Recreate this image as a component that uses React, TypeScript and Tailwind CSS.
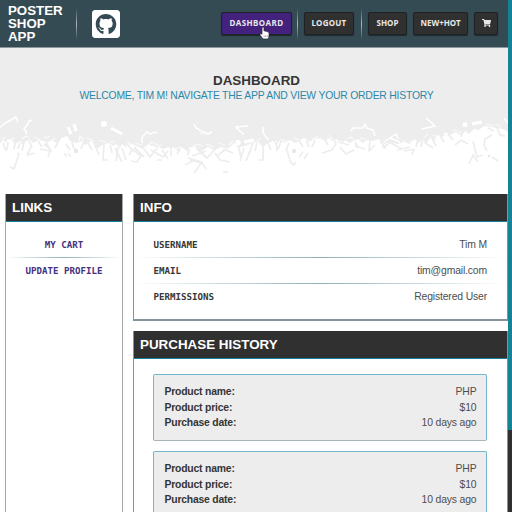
import React from "react";
import { FaGithubSquare, FaShoppingCart } from "react-icons/fa";

const arial = "font-['Liberation_Sans',Arial,sans-serif]";

const whiteMarks =
  "M-1 128 L4 124 L16 117 L18 122 M32 120 L29 121 L27 125 L24 129 L26 131 L26 134 M157 133 L154 132 L151 134 L147 132 L142 137 L142 143 M194 124 L196 128 L200 130 L203 132 L201 134 M203 132 L208 134 L212 132 M248 126 L236 127 L244 135 M263 127 L263 132 L265 136 L269 140 M351 131 L353 128 L363 128 L365 124 L367 128 L373 130 L375 136 M426 118 L435 126 L422 129 M504 118 L509 124 M384 142 L396 134 L398 139 M390 138 L400 142";
const whiteBold = "M68 127 L71 134 M74 124 L76 131 M111 128 L122 134 M244 142 L254 140 M472 124 L482 122";
const whiteSmall =
  "M1 139 L6 138 M11 141 L14 138 M22 139 L26 136 L30 138 M35 137 L40 140 M44 138 L50 136 M52 141 L55 138 M79 141 L80 136 L84 141 M87 138 L94 141 M99 140 L106 142 M110 143 L114 141 M127 142 L132 145 M135 143 L142 145 M144 148 L152 142 L160 146 M162 144 L158 149 M168 147 L171 150 M175 149 L180 147 M190 149 L197 144 L203 146 M206 144 L214 147 M219 143 L225 145 M229 145 L233 141 M257 143 L260 138 M272 143 L277 141 M282 139 L287 142 M293 138 L299 140 M304 138 L309 142 M312 139 L318 136 M320 138 L324 141 M329 135 L333 140 M337 140 L342 142 M347 139 L351 137 L355 141 M360 138 L366 139 M370 142 L377 143 M402 141 L407 143 M409 142 L416 141 M424 138 L428 133 M432 135 L438 137 M443 133 L448 136 M452 130 L459 131 M458 135 L461 131 M486 124 L494 126 M496 124 L501 127";
const grayMarks =
  "M17 153 L19 154 L14 169 L10 167 M31 147 L27 155 L35 153 M40 149 L50 151 L48 157 M52 151 L44 144 M104 144 L103 160 L108 160 M115 148 L122 162 M122 148 L126 160 M132 149 L141 156 L137 162 L131 161 M151 150 L163 157 L168 151 M157 160 L162 160 M190 160 L202 163 L206 169 M185 165 L195 160 M194 173 L202 162 L188 158 M215 153 L220 160 L230 162 M223 149 L233 153 M240 161 L244 148 M246 161 L250 151 M263 146 L263 160 L259 160 M287 151 L291 163 L294 165 L296 162 M299 157 L303 152 M304 159 L308 153 M322 153 L332 150 L336 144 L333 136 M340 147 L346 154 L354 150 M355 146 L365 149 M370 140 L369 151 L375 145 M382 148 L394 140 M397 150 L410 147 M404 151 L414 149 L412 155 M424 142 L433 148 M455 145 L461 140 L468 144 M473 141 L477 157 L483 155 M492 135 L485 139 L484 145 L487 151 M469 164 L473 155 L478 162 M492 157 L498 161 M223 172 L228 172";
const grayTeeth =
  "M3 143 L6 151 M8 142 L7 150 M15 143 L14 149 M20 143 L18 149 M24 142 L22 151 M29 141 L32 147 M38 141 L42 147 M46 143 L50 149 M58 142 L55 148 M66 144 L70 150 M72 142 L74 149 M84 141 L81 149 M88 143 L92 150 M95 145 L99 155 M110 145 L112 153 M118 147 L116 161 M128 145 L132 150 L129 155 M134 147 L144 157 M144 149 L150 157 L157 148 M162 150 L168 159 M171 148 L171 156 M180 149 L177 154 M189 149 L188 155 M196 148 L207 158 L216 148 M206 151 L192 156 M217 156 L226 149 M238 145 L241 157 M253 143 L249 154 M257 143 L255 151 M268 143 L271 150 M276 138 L277 151 M282 139 L278 149 M289 143 L286 151 M299 140 L303 147 M306 140 L309 147 M315 140 L312 147 M325 139 L328 145 M338 142 L349 145 M355 142 L358 148 M380 141 L386 149 M391 143 L402 149 M418 139 L416 147 M423 137 L421 147 M431 136 L436 146 M440 136 L444 142 M448 134 L453 140 M463 130 L461 137 M488 128 L494 131 M497 128 L500 135 L505 136";
const horizon =
  "M0 104 H508 V132 L503 129 L496 128 L491 127 L484 126 L479 130 L474 129 L469 134 L465 131 L461 136 L456 132 L450 135 L446 132 L443 137 L437 135 L434 142 L431 136 L427 143 L422 139 L419 143 L415 139 L409 144 L404 142 L397 144 L390 142 L384 144 L379 139 L373 141 L367 140 L363 143 L358 139 L349 143 L345 140 L342 144 L336 139 L332 141 L329 138 L324 141 L318 138 L312 140 L308 143 L304 138 L299 141 L295 143 L290 140 L284 143 L281 139 L276 145 L273 141 L268 143 L263 147 L258 142 L252 143 L245 146 L239 147 L234 143 L228 149 L222 147 L214 150 L208 147 L200 152 L197 147 L190 147 L187 151 L181 147 L178 151 L173 147 L171 150 L168 147 L164 149 L157 147 L149 145 L143 149 L137 146 L130 143 L126 147 L122 144 L120 148 L116 144 L113 146 L109 143 L104 144 L98 148 L94 145 L92 141 L88 143 L85 145 L82 141 L76 143 L70 141 L67 136 L62 138 L58 143 L51 140 L47 143 L44 141 L38 140 L34 143 L30 140 L26 141 L23 145 L20 141 L15 144 L11 139 L7 140 L6 143 L3 140 L0 144 Z";

function Separator() {
  return <div className="h-8 w-px bg-gradient-to-b from-transparent via-[#aeb9bf] to-transparent" />;
}

function NavButton({ className, children }: { className: string; children: React.ReactNode }) {
  return (
    <div
      className={`flex h-[23px] items-center justify-center rounded-[2px] border border-[#1c2226] pb-px font-['Noto_Sans',sans-serif] text-[8px] font-bold text-[#e8e8e8] shadow-[0_1px_1px_#20282c] ${className}`}
    >
      {children}
    </div>
  );
}

function PanelTitle({ children }: { children: React.ReactNode }) {
  return (
    <h2 className="flex h-7 items-center border-b border-[#16809a] bg-[#303030] px-1.5 pt-px text-[13.4px] font-bold text-white">
      {children}
    </h2>
  );
}

function Rule() {
  return <div className="h-px bg-gradient-to-r from-transparent via-[#8fb0ba] to-transparent" />;
}

function InfoRow({ label, value }: { label: string; value: string }) {
  return (
    <div className="flex h-[25px] items-center justify-between pr-[20px] pl-[19.5px]">
      <span className="pt-[2px] font-['DejaVu_Sans_Mono',monospace] text-[9.15px] font-bold text-[#383838]">
        {label}
      </span>
      <span className="text-[10.4px] tracking-[-0.15px] text-[#4d4d4d]">{value}</span>
    </div>
  );
}

function Purchase() {
  const rows = [
    ["Product name:", "PHP"],
    ["Product price:", "$10"],
    ["Purchase date:", "10 days ago"],
  ];
  return (
    <div className="h-[67px] rounded-[2px] border border-[#73b5c9] border-b-[#a9b5b9] bg-[#ededed] pt-[9px] pr-[9.5px] pl-[10.5px] text-[10.4px] leading-[15.5px]">
      {rows.map(([label, value]) => (
        <div key={label} className="flex justify-between">
          <span className="font-bold tracking-[-0.2px] text-[#353535]">{label}</span>
          <span className="tracking-[-0.15px] text-[#4d4d4d]">{value}</span>
        </div>
      ))}
    </div>
  );
}

function HandCursor() {
  return (
    <svg className="absolute top-[14px] left-[38px] h-[14px] w-[11px]" viewBox="0 0 11 14">
      <path
        d="M3 1.500 Q4 .3 5 1.500 V5 Q6 4.400 6.700 5.300 Q7.700 4.800 8.300 5.900 Q9.800 5.400 10 7 V9.500 Q10 11.500 9 13 H4 Q2.500 10.800 1 9 Q.5 7.600 2 7.500 L3 8.300 Z"
        fill="#fff"
        stroke="#2a2438"
        strokeWidth=".7"
      />
      <path d="M5.200 9.500 V11 M6.800 9.500 V11 M8.300 9.500 V11" stroke="#555" strokeWidth=".5" />
    </svg>
  );
}

export default function App() {
  return (
    <div className={`flex h-[512px] w-[512px] overflow-hidden bg-white ${arial}`}>
      <div className="flex w-[508px] flex-none flex-col">
        <header className="flex h-12 flex-none items-center border-b border-[#8d989c] bg-[#344b54]">
          <div className="ml-2 w-[68px] text-[13.3px] leading-[13px] font-bold text-white">
            <div>POSTER</div>
            <div>SHOP</div>
            <div>APP</div>
          </div>
          <Separator />
          <FaGithubSquare className="ml-[15px] h-8 w-7 flex-none text-white" />
          <div className="ml-auto flex items-center pr-[10px]">
            <div className="relative">
              <NavButton className="w-[71px] bg-[#45217e] tracking-[0.45px]">DASHBOARD</NavButton>
              <HandCursor />
            </div>
            <div className="mr-[6px] ml-[5px]"><Separator /></div>
            <NavButton className="w-[50px] bg-[#303030] tracking-[0.25px]">LOGOUT</NavButton>
            <div className="mr-[6px] ml-[7px]"><Separator /></div>
            <NavButton className="w-[39px] bg-[#303030]">SHOP</NavButton>
            <NavButton className="ml-[6px] w-[55px] bg-[#303030]">NEW+HOT</NavButton>
            <NavButton className="ml-[6px] w-6 bg-[#303030]">
              <FaShoppingCart className="h-2 w-[9px]" />
            </NavButton>
          </div>
        </header>

        <section className="h-[146px] flex-none">
          <div className="h-14 bg-[#ededed] pt-[25px] text-center">
            <h1 className="pl-[5px] text-[13.4px] leading-4 font-bold text-[#353535]">DASHBOARD</h1>
            <p className="pl-[5px] text-[10.4px] leading-[13px] tracking-[-0.22px] whitespace-nowrap text-[#2c88a8]">
              WELCOME, TIM M! NAVIGATE THE APP AND VIEW YOUR ORDER HISTORY
            </p>
          </div>
          <svg className="block h-[90px] w-[508px]" viewBox="0 104 508 90" fill="none">
            <path d={horizon} fill="#ededed" />
            <path d={grayTeeth} stroke="#ededed" strokeWidth="1.8" strokeLinejoin="round" />
            <path d={grayMarks} stroke="#ededed" strokeWidth="1.7" strokeLinejoin="round" />
            <path d="M64 153 L67 157 M68 153 L71 157" stroke="#ededed" strokeWidth="1.5" />
            <path d={whiteSmall} stroke="#fafafa" strokeWidth="1.2" />
            <path d={whiteMarks} stroke="#fff" strokeWidth="1.5" strokeLinejoin="round" />
            <path d={whiteBold} stroke="#fff" strokeWidth="3" />
            <circle cx="104" cy="124" r="3" fill="#fff" />
            <circle cx="64" cy="141" r="3.3" fill="#fff" />
            <circle cx="238" cy="142.500" r="2.700" fill="#fff" />
            <circle cx="465" cy="124.500" r="2.500" fill="#fff" />
            <circle cx="76" cy="151" r="2.200" fill="#e8e8e8" />
            <circle cx="294" cy="151" r="2.200" fill="#e8e8e8" />
            <circle cx="489" cy="156" r="1.300" fill="#e8e8e8" />
          </svg>
        </section>

        <main className="flex min-h-0 flex-1 gap-[10px] pl-[5px]">
          <aside className="w-[118px] flex-none border-x border-[#a3a7a9]">
            <PanelTitle>LINKS</PanelTitle>
            <div className="pt-[10px] text-center font-['DejaVu_Sans_Mono',monospace] text-[9.15px] font-bold text-[#45317e]">
              <div className="h-[25px] leading-[26px]">MY CART</div>
              <Rule />
              <div className="h-[25px] leading-[26px]">UPDATE PROFILE</div>
            </div>
          </aside>
          <div className="flex flex-1 flex-col gap-[10px]">
            <section className="h-[127px] flex-none border-x border-b-2 border-[#84929a]">
              <PanelTitle>INFO</PanelTitle>
              <div className="pt-[10px]">
                <InfoRow label="USERNAME" value="Tim M" />
                <Rule />
                <InfoRow label="EMAIL" value="tim@gmail.com" />
                <Rule />
                <InfoRow label="PERMISSIONS" value="Registered User" />
              </div>
            </section>
            <section className="flex-1 border-x border-[#84929a]">
              <PanelTitle>PURCHASE HISTORY</PanelTitle>
              <div className="flex flex-col gap-[10px] pt-[15px] pr-[20px] pl-[19px]">
                <Purchase />
                <Purchase />
              </div>
            </section>
          </div>
        </main>
      </div>
      <div className="flex w-1 flex-col">
        <div className="h-[430px] bg-[#148398]" />
        <div className="flex-1 bg-[#303030]" />
      </div>
    </div>
  );
}
